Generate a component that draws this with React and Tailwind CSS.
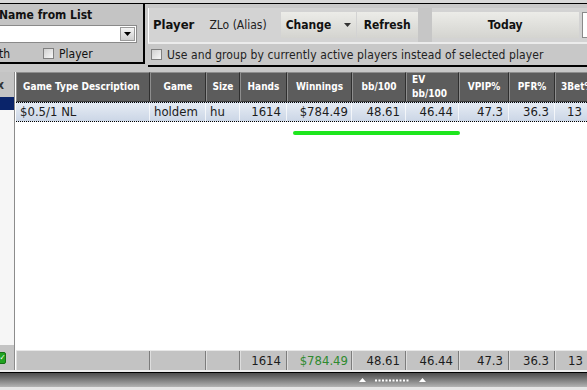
import React from "react";

const cols = [
  { label: "Game Type Description", w: "w-[134px]", head: "justify-start pl-[6px]", val: "$0.5/1 NL", cell: "justify-start pl-[4px]", foot: "" },
  { label: "Game", w: "w-[56px]", head: "justify-center", val: "holdem", cell: "justify-start pl-[4px]", foot: "" },
  { label: "Size", w: "w-[34px]", head: "justify-center", val: "hu", cell: "justify-start pl-[4px]", foot: "" },
  { label: "Hands", w: "w-[47px]", head: "justify-center", val: "1614", cell: "justify-end pr-[5px]", foot: "1614" },
  { label: "Winnings", w: "w-[65px]", head: "justify-center", val: "$784.49", cell: "justify-end pr-[3px]", foot: "$784.49", green: true },
  { label: "bb/100", w: "w-[54px]", head: "justify-center", val: "48.61", cell: "justify-end pr-[5px]", foot: "48.61" },
  { label: "EV\nbb/100", w: "w-[53px]", head: "justify-start pl-[5px]", val: "46.44", cell: "justify-end pr-[5px]", foot: "46.44" },
  { label: "VPIP%", w: "w-[50px]", head: "justify-center", val: "47.3", cell: "justify-end pr-[5px]", foot: "47.3" },
  { label: "PFR%", w: "w-[46px]", head: "justify-center", val: "36.3", cell: "justify-end pr-[5px]", foot: "36.3" },
  { label: "3Bet%", w: "w-[60px]", head: "justify-start pl-[5px]", val: "13", cell: "justify-start pl-[12px]", foot: "13" },
];

function Check({ className = "" }) {
  return (
    <div className={`w-[11px] h-[11px] shrink-0 border border-[#808080] bg-gradient-to-br from-[#d0d0d0] to-[#f8f8f8] ${className}`} />
  );
}

function Arrow({ color = "#000" }) {
  return (
    <svg width="7" height="4" viewBox="0 0 7 4">
      <path d="M0 0 H7 L3.5 4 Z" fill={color} />
    </svg>
  );
}

export default function App() {
  return (
    <div className="w-[587px] h-[390px] overflow-hidden bg-[#c8c8c8] flex flex-col font-['DejaVu_Sans_Condensed','Liberation_Sans',sans-serif] text-[#111] relative">
      <div className="h-[3px] bg-[#d8d8d8] shrink-0" />
      <div className="h-px bg-black shrink-0" />

      {/* top panels */}
      <div className="flex h-[63px] shrink-0 items-start">
        <div className="w-[145px] h-[60px] shrink-0 bg-[#c4c4c4] border-r-2 border-b-2 border-black flex flex-col">
          <div className="h-[21px] pt-[4px] font-bold text-[12px] leading-[14px] -ml-[1px]">Name from List</div>
          <div className="h-[18px] w-[137px] mt-[1px] bg-white border border-[#8a8a8a] border-l-0 flex justify-end p-px">
            <div className="w-[15px] h-full bg-gradient-to-b from-[#f4f4f4] to-[#cfcfcf] border border-[#9a9a9a] flex items-center justify-center">
              <Arrow />
            </div>
          </div>
          <div className="flex items-center h-[17px] mt-[2px] text-[12px]">
            <span className="-ml-[1px] w-[44px]">th</span>
            <Check />
            <span className="ml-[5px]">Player</span>
          </div>
        </div>

        <div className="w-[3px] shrink-0" />

        <div className="flex-1 min-w-0 h-[63px] flex flex-col border-b-2 border-black">
          <div className="h-[4px] shrink-0" />
          <div className="h-[36px] shrink-0 flex items-center bg-[#d3d3d3] border-l border-l-white border-b-2 border-b-[#ececec] whitespace-nowrap">
            <span className="ml-[4px] font-bold text-[13px] shrink-0">Player</span>
            <span className="ml-[15px] text-[12px] text-[#222] shrink-0">ZLo (Alias)</span>
            <div className="ml-[14px] w-[75px] h-[26px] shrink-0 bg-gradient-to-b from-[#ecece8] to-[#d4d4d0] flex items-center font-bold text-[12px]">
              <span className="ml-[5px]">Change</span>
              <span className="ml-[13px]"><Arrow color="#333" /></span>
            </div>
            <div className="ml-px w-[61px] h-[26px] shrink-0 bg-gradient-to-b from-[#ecece8] to-[#d4d4d0] flex items-center justify-center font-bold text-[12px]">Refresh</div>
            <div className="w-[14px] h-[34px] shrink-0 bg-[#c6c6c6]" />
            <div className="w-[147px] h-[26px] shrink-0 bg-gradient-to-b from-[#ecece8] to-[#d4d4d0] flex items-center justify-center font-bold text-[12px]">Today</div>
            <div className="ml-[3px] w-[10px] h-[26px] shrink-0 bg-white border border-[#8a8a8a]" />
          </div>
          <div className="flex-1 flex items-center whitespace-nowrap">
            <Check className="ml-[3px]" />
            <span className="ml-[5px] text-[12px] tracking-[0.1px] text-[#222]">Use and group by currently active players instead of selected player</span>
          </div>
        </div>
      </div>

      <div className="h-[5px] shrink-0" />

      {/* main */}
      <div className="flex h-[298px] shrink-0">
        <div className="w-[14px] shrink-0 flex flex-col">
          <div className="h-[25px] bg-[#c4c4c4] flex items-center">
            <span className="-ml-[3px] font-bold text-[12px] text-[#333]">x</span>
          </div>
          <div className="h-[13px] bg-[#0a246a]" />
          <div className="flex-1 bg-[#f6f6f6]" />
          <div className="h-[25px] bg-[#c4c4c4] pt-[7px]">
            <div className="-ml-[6px] w-[12px] h-[12px] rounded-[2px] bg-[#21a321] border border-[#157015] flex items-center justify-center">
              <span className="text-white text-[8px] leading-none ml-[5px]">✓</span>
            </div>
          </div>
        </div>
        <div className="w-px bg-[#8c8c8c]" />
        <div className="w-px bg-white" />

        <div className="flex-1 min-w-0 flex flex-col bg-white overflow-hidden relative">
          <div className="flex h-[30px] shrink-0 bg-[#a8a8a8]">
            {cols.map((c) => (
              <div
                key={c.label}
                className={`${c.w} ${c.head} shrink-0 flex items-center bg-[#5c5c5c] border-t border-l border-[#8e8e8e] border-r border-r-[#2f2f2f] border-b border-b-[#3a3a3a] text-white font-bold text-[10px] leading-[14px] whitespace-pre`}
              >
                {c.label}
              </div>
            ))}
          </div>
          <div className="flex h-[20px] shrink-0 bg-gradient-to-b from-[#e6ecf4] to-[#cbd6e6] border-y border-dotted border-black">
            {cols.map((c) => (
              <div key={c.label} className={`${c.w} ${c.cell} shrink-0 flex items-center border-r border-white/70 text-[13px] text-[#1c1c1c]`}>
                {c.val}
              </div>
            ))}
          </div>
          <div className="flex-1" />
          <div className="flex h-[20px] shrink-0 border-t border-[#e8e8e8]">
            {cols.map((c) => (
              <div
                key={c.label}
                className={`${c.w} ${c.cell} shrink-0 flex items-center bg-[#c3c3c3] border-r border-r-[#7c7c7c] border-l border-l-[#dedede] text-[13px] ${c.green ? "text-[#2f8a2f]" : "text-[#1c1c1c]"}`}
              >
                {c.foot}
              </div>
            ))}
          </div>

          <div className="absolute left-[277px] top-[59px] w-[167px] h-[4px] rounded-full bg-[#1ee61e]" />
        </div>
      </div>

      {/* bottom splitter */}
      <div className="h-[2px] shrink-0 bg-[#eeeeee]" />
      <div className="h-px shrink-0 bg-black" />
      <div className="h-[14px] shrink-0 bg-gradient-to-b from-[#4e4e4e] to-[#b4b4b4] flex items-center">
        <svg className="ml-[358px]" width="70" height="6" viewBox="0 0 70 6">
          <path d="M1 5 L4.5 1 L8 5 Z" fill="#fff" />
          <path d="M61 5 L64.5 1 L68 5 Z" fill="#fff" />
          <line x1="17" y1="3.5" x2="51" y2="3.5" stroke="#fff" strokeWidth="2" strokeDasharray="2 1.5" />
        </svg>
      </div>
      <div className="flex-1 bg-[#e6e6e6]" />
    </div>
  );
}
